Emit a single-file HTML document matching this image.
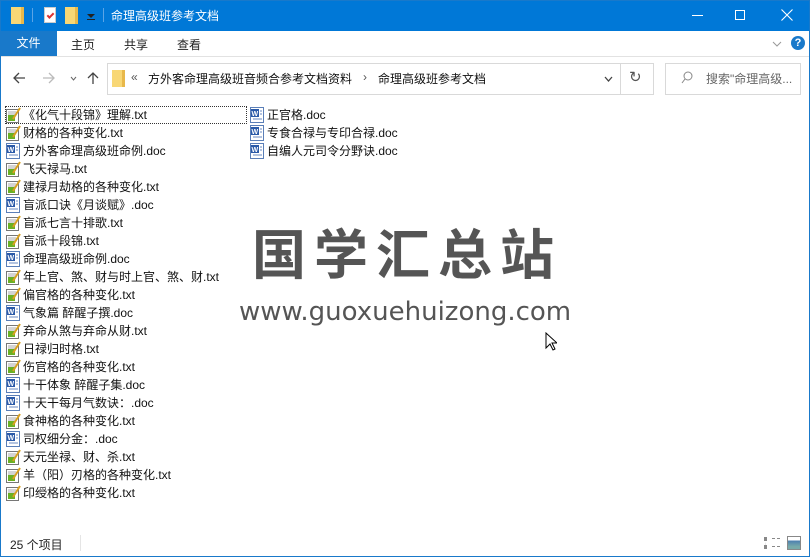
<!DOCTYPE html>
<html><head><meta charset="utf-8"><style>
*{margin:0;padding:0;box-sizing:border-box}
body{width:810px;height:557px;overflow:hidden;background:#fff;font-family:"Liberation Sans","Noto Sans CJK SC",sans-serif;font-size:12px;color:#000;position:relative}
.abs{position:absolute}
#frame{left:0;top:0;width:810px;height:557px;border:1px solid #1979ca}
#title{left:0;top:0;width:810px;height:31px;background:#0078d7;color:#fff}
.folder{display:inline-block;width:13px;height:17px;background:#f8d775;border-right:3px solid #e8b84a}
.tab{top:36px;font-size:12px;color:#222}
.row{position:absolute;height:18px;line-height:18px;font-size:12px;white-space:nowrap;color:#111}
.ic{position:absolute;left:0;top:1px;width:16px;height:16px}
.row span{position:absolute;left:18px;top:0}
</style></head><body>
<div id="title" class="abs">
 <div class="abs folder" style="left:11px;top:7px"></div>
 <div class="abs" style="left:32px;top:8px;width:1px;height:14px;background:#5aa4e6"></div>
 <div class="abs" style="left:44px;top:7px;width:12px;height:16px;background:#fff;border:1px solid #ccc"><div style="position:absolute;left:2px;top:5px;width:7px;height:4px;border-left:2px solid #d33;border-bottom:2px solid #d33;transform:rotate(-45deg)"></div></div>
 <div class="abs folder" style="left:65px;top:7px"></div>
 <div class="abs" style="left:87px;top:14px;width:0;height:0;border-left:4px solid transparent;border-right:4px solid transparent;border-top:4px solid #222"></div>
 <div class="abs" style="left:87px;top:19px;width:8px;height:1px;background:#222"></div>
 <div class="abs" style="left:103px;top:8px;width:1px;height:14px;background:#5aa4e6"></div>
 <div class="abs" style="left:111px;top:7px;font-size:12px">命理高级班参考文档</div>
 <div class="abs" style="left:692px;top:15px;width:11px;height:1px;background:#fff"></div>
 <div class="abs" style="left:735px;top:10px;width:10px;height:10px;border:1px solid #fff"></div>
 <svg class="abs" style="left:781px;top:9px" width="12" height="12"><path d="M0.5 0.5L11.5 11.5M11.5 0.5L0.5 11.5" stroke="#fff" stroke-width="1.1"/></svg>
</div>
<div class="abs" style="left:0;top:31px;width:57px;height:25px;background:#1979ca;color:#fff;text-align:center;line-height:25px">文件</div>
<div class="abs tab" style="left:71px">主页</div>
<div class="abs tab" style="left:124px">共享</div>
<div class="abs tab" style="left:177px">查看</div>
<div class="abs" style="left:0;top:56px;width:810px;height:1px;background:#e2e2e2"></div>
<svg class="abs" style="left:772px;top:41px" width="10" height="6"><path d="M1 1L5 5L9 1" stroke="#999" fill="none"/></svg>
<div class="abs" style="left:791px;top:36px;width:14px;height:14px;border-radius:50%;background:#1979ca;color:#fff;font-size:11px;font-weight:bold;text-align:center;line-height:14px">?</div>
<svg class="abs" style="left:12px;top:72px" width="14" height="12"><path d="M13 6H2M7 1L2 6L7 11" stroke="#444" stroke-width="1.3" fill="none"/></svg>
<svg class="abs" style="left:42px;top:72px" width="14" height="12"><path d="M1 6H12M7 1L12 6L7 11" stroke="#bbb" stroke-width="1.3" fill="none"/></svg>
<svg class="abs" style="left:70px;top:76px" width="7" height="5"><path d="M1 1L3.5 4L6 1" stroke="#666" fill="none"/></svg>
<svg class="abs" style="left:87px;top:71px" width="12" height="14"><path d="M6 13V2M1 7L6 2L11 7" stroke="#444" stroke-width="1.3" fill="none"/></svg>
<div class="abs" style="left:107px;top:63px;width:547px;height:32px;border:1px solid #d9d9d9"></div>
<div class="abs" style="left:620px;top:64px;width:1px;height:30px;background:#d9d9d9"></div>
<div class="abs folder" style="left:112px;top:70px"></div>
<div class="abs" style="left:131px;top:70px;color:#555">«</div>
<div class="abs" style="left:148px;top:70px;color:#111">方外客命理高级班音频合参考文档资料</div>
<div class="abs" style="left:363px;top:70px;color:#555">›</div>
<div class="abs" style="left:378px;top:70px;color:#111">命理高级班参考文档</div>
<svg class="abs" style="left:604px;top:76px" width="9" height="6"><path d="M1 1L4.5 5L8 1" stroke="#444" stroke-width="1.3" fill="none"/></svg>
<div class="abs" style="left:629px;top:68px;font-size:15px;color:#555">↻</div>
<div class="abs" style="left:665px;top:63px;width:136px;height:32px;border:1px solid #d9d9d9"></div>
<svg class="abs" style="left:681px;top:71px" width="12" height="14"><circle cx="7" cy="5" r="4" stroke="#888" fill="none"/><path d="M4 8L1 12" stroke="#888"/></svg>
<div class="abs" style="left:706px;top:70px;color:#666">搜索"命理高级...</div>
<div id="files"></div>
<div class="abs" style="left:5px;top:106px;width:242px;height:18px;border:1px dotted #333"></div>
<div class="abs" style="left:252px;top:224px;font-size:54px;font-weight:bold;color:#555;letter-spacing:8px;line-height:64px">国学汇总站</div>
<div class="abs" style="left:239px;top:296px;font-size:26px;color:#555;font-family:'DejaVu Sans',sans-serif;line-height:32px">www.guoxuehuizong.com</div>
<svg class="abs" style="left:545px;top:332px" width="12" height="19"><path d="M1 1V16L5 12L8 18L10 17L7 11H12Z" fill="#fff" stroke="#000"/></svg>
<div class="abs" style="left:10px;top:536px;color:#222">25 个项目</div>
<div class="abs" style="left:80px;top:535px;width:1px;height:16px;background:#e5e5e5"></div>
<div class="abs" style="left:764px;top:537px;width:14px;height:12px;border-left:3px dotted #888"></div>
<div class="abs" style="left:772px;top:538px;width:8px;height:9px;border-top:1px dashed #888;border-bottom:1px dashed #888"></div>
<div class="abs" style="left:787px;top:536px;width:14px;height:14px;border:1px solid #888;background:linear-gradient(#fff 30%,#4c7fb0 30%,#7aa 80%)"></div>
<div id="frame" class="abs"></div>
<script>
var c1=["《化气十段锦》理解.txt","财格的各种变化.txt","方外客命理高级班命例.doc","飞天禄马.txt","建禄月劫格的各种变化.txt","盲派口诀《月谈赋》.doc","盲派七言十排歌.txt","盲派十段锦.txt","命理高级班命例.doc","年上官、煞、财与时上官、煞、财.txt","偏官格的各种变化.txt","气象篇 醉醒子撰.doc","弃命从煞与弃命从财.txt","日禄归时格.txt","伤官格的各种变化.txt","十干体象 醉醒子集.doc","十天干每月气数诀：.doc","食神格的各种变化.txt","司权细分金：.doc","天元坐禄、财、杀.txt","羊（阳）刃格的各种变化.txt","印绶格的各种变化.txt"];
var c2=["正官格.doc","专食合禄与专印合禄.doc","自编人元司令分野诀.doc"];
function ic(n){return n.slice(-3)=="doc"?'<svg class="ic" viewBox="0 0 16 16"><rect x="1.5" y="0.5" width="13" height="15" fill="#fff" stroke="#5b7fb8"/><rect x="2" y="2" width="8" height="8" fill="#2b5aa8"/><text x="2.5" y="9" font-size="7" fill="#fff" font-family="Liberation Sans" font-weight="bold">W</text><path d="M11 4H13M11 7H13M4 12H13" stroke="#6a8ac0"/></svg>':'<svg class="ic" viewBox="0 0 16 16"><rect x="1.5" y="2.5" width="12" height="13" fill="#fff" stroke="#777"/><path d="M3 5H11M3 7H11" stroke="#aaa"/><rect x="3" y="8" width="7" height="6" fill="#6ab023"/><path d="M8 12L15 1" stroke="#d8a020" stroke-width="2"/></svg>'}
var h="";c1.forEach(function(n,i){h+='<div class="row" style="left:5px;top:'+(106+i*18)+'px">'+ic(n)+'<span>'+n+'</span></div>'});
c2.forEach(function(n,i){h+='<div class="row" style="left:249px;top:'+(106+i*18)+'px">'+ic(n)+'<span>'+n+'</span></div>'});
document.getElementById("files").innerHTML=h;
</script>
</body></html>
